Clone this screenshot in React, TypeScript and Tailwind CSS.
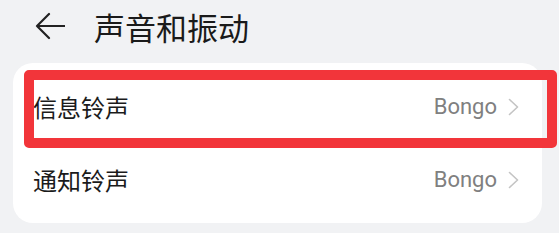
import React from "react";

const Row = ({ label, value }: { label: string; value: string }) => (
  <div className="flex h-[73px] items-center justify-between pl-5 pr-[23px]">
    <span className="text-[24px] leading-none text-[#1b1b1b]">{label}</span>
    <div className="flex items-center gap-[11px]">
      <span className="text-[22px] leading-none text-[#808080]" style={{ fontFamily: "Roboto, 'Noto Sans CJK SC', sans-serif" }}>
        {value}
      </span>
      <svg width="11" height="18" viewBox="0 0 11 18" fill="none">
        <path d="M1.5 1.5 L9.5 9 L1.5 16.5" stroke="#c4c4c4" strokeWidth="1.6" strokeLinecap="round" strokeLinejoin="round" />
      </svg>
    </div>
  </div>
);

export default function App() {
  return (
    <div
      className="relative h-[233px] w-full overflow-hidden bg-[#f1f2f4]"
      style={{ fontFamily: "'Noto Sans CJK SC', Roboto, sans-serif" }}
    >
      <div className="flex h-[52px] items-center pl-[35px]">
        <svg width="30" height="28" viewBox="0 0 30 28" fill="none">
          <path d="M14 2 L2 14 L14 26 M2 14 H30" stroke="#222" strokeWidth="2.2" strokeLinecap="round" strokeLinejoin="round" />
        </svg>
        <span className="ml-[29px] text-[31px] leading-none text-[#1a1a1a]">声音和振动</span>
      </div>
      <div className="mx-[13px] mt-[11px] w-[529px] rounded-[20px] bg-white py-[7px]">
        <Row label="信息铃声" value="Bongo" />
        <Row label="通知铃声" value="Bongo" />
      </div>
      <div className="absolute left-[24px] top-[70px] h-[78px] w-[533px] rounded-[5px] border-[10px] border-[#f2353a]" />
    </div>
  );
}
